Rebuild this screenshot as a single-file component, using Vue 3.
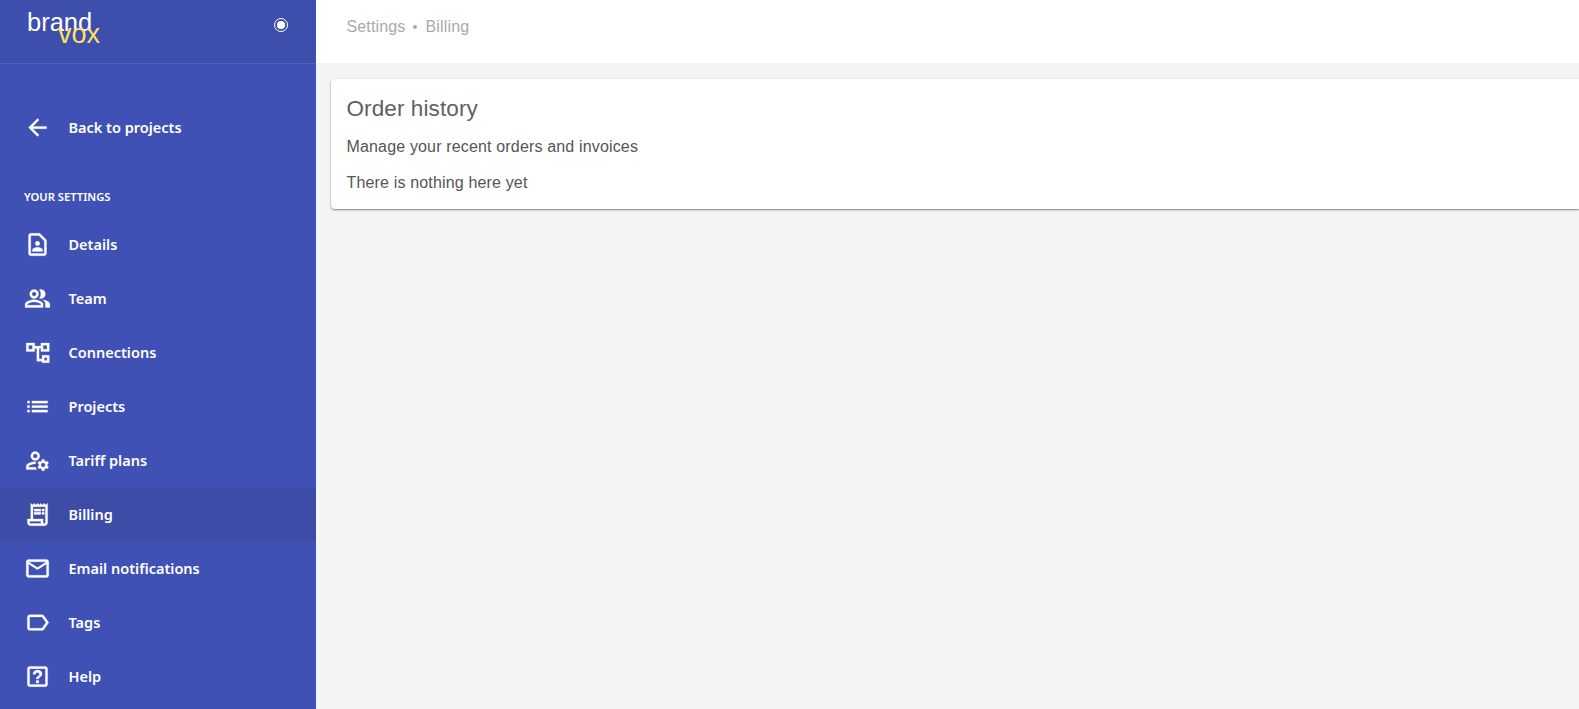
<script setup>
const items = [
  { label: 'Details', paths: ['M14 2H6c-1.1 0-2 .9-2 2v16c0 1.1.9 2 2 2h12c1.1 0 2-.9 2-2V8l-6-6zm4 18H6V4h7.17L18 8.83V20z', 'M12 9a2 2 0 1 0 0 4 2 2 0 0 0 0-4z', 'M7.5 18.2v-1.4c0-1.5 3-2.4 4.5-2.4s4.5.9 4.5 2.4v1.4H7.5z'] },
  { label: 'Team', paths: ['M16.67 13.13C18.04 14.06 19 15.32 19 17v3h4v-3c0-2.18-3.57-3.47-6.33-3.87z', 'M15 12c2.21 0 4-1.79 4-4s-1.79-4-4-4c-.47 0-.91.1-1.33.24C14.5 5.27 15 6.58 15 8s-.5 2.73-1.33 3.76c.42.14.86.24 1.33.24z', 'M9 12c2.21 0 4-1.79 4-4s-1.79-4-4-4-4 1.79-4 4 1.79 4 4 4zm0-6c1.1 0 2 .9 2 2s-.9 2-2 2-2-.9-2-2 .9-2 2-2z', 'M9 13c-2.67 0-8 1.34-8 4v3h16v-3c0-2.66-5.33-4-8-4zm6 5H3v-.99C3.2 16.29 6.3 15 9 15s5.8 1.29 6 2z'] },
  { label: 'Connections', paths: ['M2 3.5h7.5V11H2V3.5zm2 2V9h3.5V5.5H4z', 'M15 3.5h7.5V11H15V3.5zm2 2V9h3.5V5.5H17z', 'M16 14.5h6.5V21H16v-6.5zm2 2V19h2.5v-2.5H18z', 'M9 6.3h6v2H9z', 'M11.4 7h2v10.8H16v2h-4.6z'] },
  { label: 'Projects', paths: ['M3 13h2v-2H3v2zm0 4h2v-2H3v2zm0-8h2V7H3v2zm4 4h14v-2H7v2zm0 4h14v-2H7v2zM7 7v2h14V7H7z'] },
  { label: 'Tariff plans', paths: ['M4 18v-.65c0-.34.16-.66.41-.81C6.1 15.53 8.03 15 10 15c.03 0 .05 0 .08.01.1-.7.3-1.37.59-1.98-.22-.02-.44-.03-.67-.03-2.42 0-4.68.67-6.61 1.82-.88.52-1.39 1.5-1.39 2.53V20h9.26c-.42-.6-.75-1.28-.97-2H4z', 'M10 12c2.21 0 4-1.79 4-4s-1.79-4-4-4-4 1.79-4 4 1.79 4 4 4zm0-6c1.1 0 2 .9 2 2s-.9 2-2 2-2-.9-2-2 .9-2 2-2z', 'M20.75 16c0-.22-.03-.42-.06-.63l1.14-1.01-1-1.73-1.45.49c-.32-.27-.68-.48-1.08-.63L18 11h-2l-.3 1.49c-.4.15-.76.36-1.08.63l-1.45-.49-1 1.73 1.14 1.01c-.03.21-.06.41-.06.63s.03.42.06.63l-1.14 1.01 1 1.73 1.45-.49c.32.27.68.48 1.08.63L16 21h2l.3-1.49c.4-.15.76-.36 1.08-.63l1.45.49 1-1.73-1.14-1.01c.03-.21.06-.41.06-.63zM17 18c-1.1 0-2-.9-2-2s.9-2 2-2 2 .9 2 2-.9 2-2 2z'] },
  { label: 'Billing', active: true, paths: ['M19.5 3.5L18 2l-1.5 1.5L15 2l-1.5 1.5L12 2l-1.5 1.5L9 2 7.5 3.5 6 2v14H3v3c0 1.66 1.34 3 3 3h12c1.66 0 3-1.34 3-3V2l-1.5 1.5zM15 20H6c-.55 0-1-.45-1-1v-1h10v2zm4-1c0 .55-.45 1-1 1s-1-.45-1-1v-3H8V5h11v14z', 'M9 7h6v2H9zM16 7h2v2h-2zM9 10h6v2H9zM16 10h2v2h-2z'] },
  { label: 'Email notifications', paths: ['M20 4H4c-1.1 0-1.99.9-1.99 2L2 18c0 1.1.9 2 2 2h16c1.1 0 2-.9 2-2V6c0-1.1-.9-2-2-2zm0 14H4V8l8 5 8-5v10zm-8-7L4 6h16l-8 5z'] },
  { label: 'Tags', paths: ['M17.63 5.84C17.27 5.33 16.67 5 16 5L5 5.01C3.9 5.01 3 5.9 3 7v10c0 1.1.9 1.99 2 1.99L16 19c.67 0 1.27-.33 1.63-.84L22 12l-4.37-6.16zM16 17H5V7h11l3.55 5L16 17z'] },
  { label: 'Help', paths: ['M19 3H5c-1.1 0-2 .9-2 2v14c0 1.1.9 2 2 2h14c1.1 0 2-.9 2-2V5c0-1.1-.9-2-2-2zm0 16H5V5h14v14z', 'M10.8 15.5h2.4v2.2h-2.4zM12 6.3c-2.4 0-4 1.5-4 3.8h2.3c0-1 .7-1.6 1.7-1.6s1.7.5 1.7 1.4c0 1.7-2.9 1.8-2.9 4.3h2.3c0-1.7 3-2.1 3-4.4 0-2.1-1.7-3.5-4.1-3.5z'] },
]
</script>

<template>
  <div class="page">
    <aside class="sidebar">
      <div class="brandbar">
        <div class="logo">
          <span class="brand">brand</span>
          <span class="vox">vox</span>
        </div>
        <span class="radio"></span>
      </div>
      <nav class="nav">
        <a class="row back">
          <svg class="icon" viewBox="0 0 24 24"><path d="M20 11H7.83l5.59-5.59L12 4l-8 8 8 8 1.41-1.41L7.83 13H20v-2z" /></svg>
          <span>Back to projects</span>
        </a>
        <div class="section">YOUR SETTINGS</div>
        <a v-for="item in items" :key="item.label" class="row" :class="{ active: item.active }">
          <svg class="icon" viewBox="0 0 24 24"><path v-for="d in item.paths" :key="d" :d="d" /></svg>
          <span>{{ item.label }}</span>
        </a>
      </nav>
    </aside>
    <main class="main">
      <header class="topbar">
        <span>Settings</span>
        <i class="dot"></i>
        <span>Billing</span>
      </header>
      <section class="card">
        <h1>Order history</h1>
        <p class="sub">Manage your recent orders and invoices</p>
        <p class="empty">There is nothing here yet</p>
      </section>
    </main>
  </div>
</template>

<style>
html, body { margin: 0; background: #f4f4f6; overflow: hidden; }
</style>

<style scoped>
.page {
  display: flex;
  height: 709px;
  overflow: hidden;
  font-family: "Liberation Sans", Arial, sans-serif;
}
.sidebar {
  width: 316px;
  flex: none;
  background: #3f51b5;
  color: #fff;
  display: flex;
  flex-direction: column;
  overflow: hidden;
}
.brandbar {
  height: 63px;
  flex: none;
  background: #3d4eac;
  border-bottom: 1px solid #5062c0;
  display: flex;
  justify-content: space-between;
  padding: 0 28px 0 27px;
}
.logo {
  display: flex;
  flex-direction: column;
  align-items: flex-start;
  padding-top: 10px;
  font-size: 25.5px;
  line-height: 25px;
}
.brand { color: #fff; }
.vox { color: #fbe160; font-size: 27px; margin: -13px 0 0 31px; }
.radio {
  width: 14px;
  height: 14px;
  box-sizing: border-box;
  margin-top: 18px;
  border-radius: 50%;
  border: 1.5px solid #fff;
  padding: 2px;
  background: #fff content-box;
  display: block;
}
.nav {
  flex: 1;
  padding-top: 36px;
  display: flex;
  flex-direction: column;
}
.row {
  height: 54px;
  flex: none;
  display: flex;
  align-items: center;
  padding-left: 24px;
  font-family: "Noto Sans", sans-serif;
  font-weight: 600;
  font-size: 14.5px;
  color: #fff;
}
.row.active { background: #3c4ca7; }
.icon {
  width: 27px;
  height: 27px;
  flex: none;
  margin-right: 17.5px;
  fill: #fff;
  stroke: #fff;
  stroke-width: 0.25;
}
.section {
  height: 63px;
  box-sizing: border-box;
  padding: 34px 0 0 24px;
  line-height: 18px;
  font-family: "Noto Sans", sans-serif;
  font-weight: 600;
  font-size: 11.2px;
}
.main {
  flex: 1;
  min-width: 0;
  display: flex;
  flex-direction: column;
}
.topbar {
  height: 63px;
  flex: none;
  background: #fff;
  padding-left: 30.5px;
  padding-bottom: 10px;
  box-sizing: border-box;
  display: flex;
  align-items: center;
  color: #a9a9ab;
  font-size: 16px;
  letter-spacing: 0.15px;
}
.dot {
  width: 4px;
  height: 4px;
  border-radius: 50%;
  background: #a9a9ab;
  margin: 1px 8.5px 0 7.5px;
}
.card {
  margin: 16px 0 0 15px;
  height: 130px;
  box-sizing: border-box;
  padding: 17px 16px 16px 15.5px;
  background: #fff;
  border-radius: 4px 0 0 4px;
  box-shadow: 0 1px 2px rgba(0, 0, 0, 0.45), 0 0 3px rgba(0, 0, 0, 0.06);
  color: #555558;
  letter-spacing: 0.16px;
}
.card h1 {
  margin: 0;
  font-size: 22.5px;
  line-height: 26px;
  font-weight: 400;
  color: #606064;
  letter-spacing: 0.1px;
}
.sub {
  margin: 15px 0 0;
  font-size: 16px;
  line-height: 20px;
}
.empty {
  margin: 16px 0 0;
  font-size: 16px;
  line-height: 20px;
}
</style>
